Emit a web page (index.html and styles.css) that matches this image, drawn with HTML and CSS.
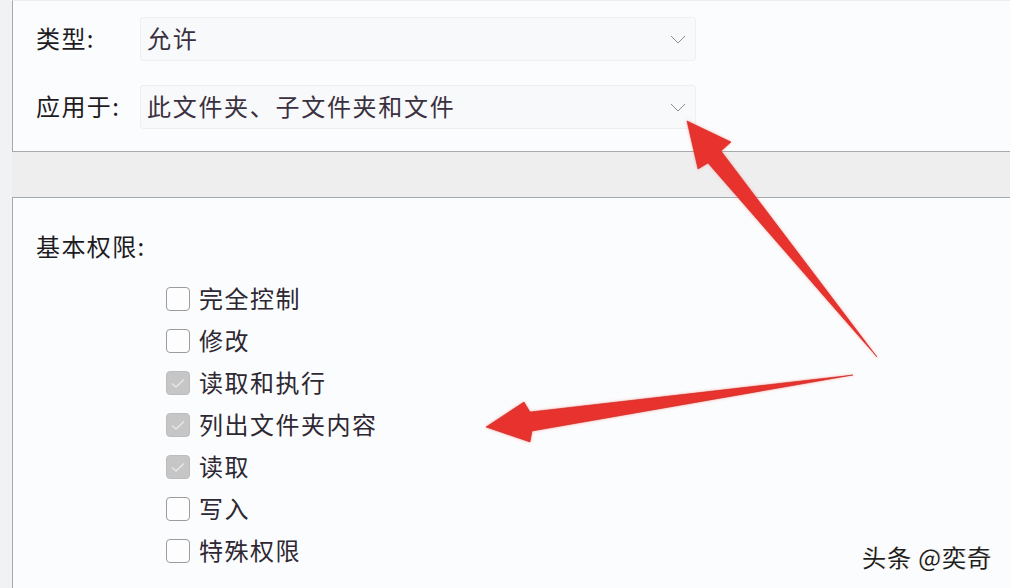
FILE: index.html
```html
<!DOCTYPE html>
<html lang="zh-CN">
<head>
<meta charset="utf-8">
<title>权限项目</title>
<link rel="stylesheet" href="styles.css">
</head>
<body>
<div class="page">
  <section class="panel panel-top">
    <div class="field">
      <span class="label">类型:</span>
      <div class="combo">
        <span class="combo-text">允许</span>
        <svg class="chev" width="16" height="9" viewBox="0 0 16 9"><path d="M1 1 L8 8 L15 1" fill="none" stroke="#8c8c8c" stroke-width="1"/></svg>
      </div>
    </div>
    <div class="field">
      <span class="label">应用于:</span>
      <div class="combo">
        <span class="combo-text">此文件夹、子文件夹和文件</span>
        <svg class="chev" width="16" height="9" viewBox="0 0 16 9"><path d="M1 1 L8 8 L15 1" fill="none" stroke="#8c8c8c" stroke-width="1"/></svg>
      </div>
    </div>
  </section>
  <div class="band"></div>
  <section class="panel panel-bottom">
    <div class="heading">基本权限:</div>
    <ul class="perms">
      <li class="perm"><span class="box"></span><span class="ptext">完全控制</span></li>
      <li class="perm"><span class="box"></span><span class="ptext">修改</span></li>
      <li class="perm"><span class="box checked"><svg viewBox="0 0 24 24" width="24" height="24"><path d="M6 12.5 L10 16 L18 8.5" fill="none" stroke="#e6e6e6" stroke-width="1.6"/></svg></span><span class="ptext">读取和执行</span></li>
      <li class="perm"><span class="box checked"><svg viewBox="0 0 24 24" width="24" height="24"><path d="M6 12.5 L10 16 L18 8.5" fill="none" stroke="#e6e6e6" stroke-width="1.6"/></svg></span><span class="ptext">列出文件夹内容</span></li>
      <li class="perm"><span class="box checked"><svg viewBox="0 0 24 24" width="24" height="24"><path d="M6 12.5 L10 16 L18 8.5" fill="none" stroke="#e6e6e6" stroke-width="1.6"/></svg></span><span class="ptext">读取</span></li>
      <li class="perm"><span class="box"></span><span class="ptext">写入</span></li>
      <li class="perm"><span class="box"></span><span class="ptext">特殊权限</span></li>
    </ul>
    <div class="watermark">头条 @奕奇</div>
  </section>
</div>
<svg class="arrows" width="1010" height="588" viewBox="0 0 1010 588">
  <defs>
    <filter id="glow" x="-10%" y="-10%" width="120%" height="120%">
      <feGaussianBlur in="SourceAlpha" stdDeviation="1.5" result="b"/>
      <feFlood flood-color="#ff6a60" flood-opacity="0.6"/>
      <feComposite in2="b" operator="in" result="g"/>
      <feMerge><feMergeNode in="g"/><feMergeNode in="SourceGraphic"/></feMerge>
    </filter>
  </defs>
  <polygon filter="url(#glow)" points="687,121 731,142 721,151 877,357 708,163 698,169" fill="#e8332f" stroke="#c42420" stroke-width="0.6" stroke-linejoin="round"/>
  <polygon filter="url(#glow)" points="486,427 524,402 530,412 853,375 532,431 530,442" fill="#e8332f" stroke="#c42420" stroke-width="0.6" stroke-linejoin="round"/>
</svg>
</body>
</html>
```

FILE: styles.css
```css
html, body {
  margin: 0;
  padding: 0;
}
body {
  width: 1010px;
  height: 588px;
  overflow: hidden;
  background: #f1f2f3;
  font-family: "Noto Sans CJK SC", "Noto Sans", sans-serif;
  position: relative;
}
.page {
  padding-left: 12px;
  display: flex;
  flex-direction: column;
  height: 588px;
  box-sizing: border-box;
}
.panel {
  background: #fbfcfd;
  border-left: 1px solid #a6aaad;
}
.panel-top {
  height: 152px;
  box-sizing: border-box;
  border-top: 1px solid #ececee;
  border-bottom: 1px solid #a6aaad;
  padding: 16px 0 0 23px;
  display: flex;
  flex-direction: column;
  gap: 24px;
}
.band {
  height: 45px;
  background: #eeeeef;
}
.panel-bottom {
  flex: 1;
  border-top: 1px solid #a6aaad;
  padding: 28px 0 0 23px;
  position: relative;
}
.field {
  display: flex;
  align-items: center;
}
.label {
  width: 104px;
  font-size: 24px;
  letter-spacing: 1.4px;
  color: #1d1b1f;
  margin-bottom: 4px;
}
.combo {
  width: 556px;
  height: 44px;
  box-sizing: border-box;
  background: #f8f9fa;
  border: 1px solid #eeeff1;
  border-radius: 3px;
  display: flex;
  align-items: center;
  justify-content: space-between;
  padding: 0 9px 0 6px;
}
.combo-text {
  font-size: 24px;
  letter-spacing: 1.7px;
  color: #3a3040;
  margin-bottom: 4px;
}
.chev {
  display: block;
}
.heading {
  font-size: 24px;
  letter-spacing: 1.4px;
  color: #1d1b1f;
  line-height: 40px;
}
.perms {
  list-style: none;
  margin: 12px 0 0 0;
  padding: 0 0 0 130px;
}
.perm {
  display: flex;
  align-items: center;
  height: 42px;
  gap: 9px;
}
.box {
  width: 24px;
  height: 24px;
  box-sizing: border-box;
  border: 1px solid #9c9c9e;
  border-radius: 4px;
  background: #fdfdfd;
  display: flex;
}
.box svg {
  margin: -1px;
}
.box.checked {
  background: #c6c6c7;
  border-color: #bdbdbe;
}
.ptext {
  font-size: 24px;
  letter-spacing: 1.5px;
  color: #2e2833;
  margin-bottom: 3px;
}
.watermark {
  position: absolute;
  right: 18px;
  bottom: 14px;
  font-size: 24px;
  color: #1e1e1e;
  letter-spacing: 1px;
  text-shadow: 1px 1px 0 #ffffff, -1px -1px 0 #ffffff, 1px 0 1px #bbbbbb;
}
.arrows {
  position: absolute;
  left: 0;
  top: 0;
  pointer-events: none;
}
```
